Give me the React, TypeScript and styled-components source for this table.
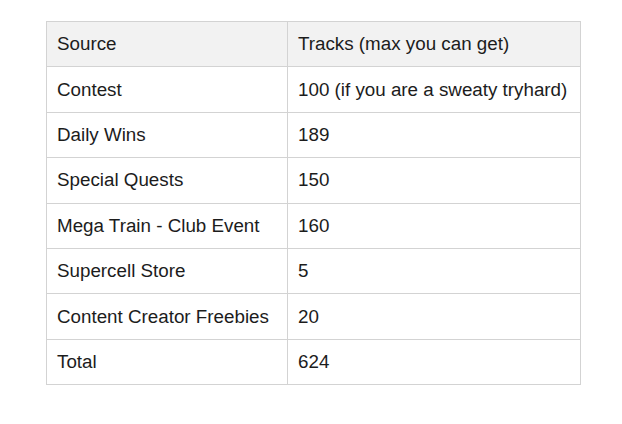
import React from "react";
import styled, { createGlobalStyle } from "styled-components";

const GlobalStyle = createGlobalStyle`
  body {
    margin: 0;
    background: #ffffff;
    font-family: "Liberation Sans", Arial, sans-serif;
  }
`;

const Page = styled.div`
  width: 622px;
  height: 424px;
  padding: 21px 0 0 46px;
  box-sizing: border-box;
`;

const Table = styled.table`
  border-collapse: collapse;
  width: 535px;
  color: #1c1c1c;
  font-size: 18.8px;
`;

const Cell = styled.td<{ $head?: boolean; $first?: boolean }>`
  border: 1px solid #d3d3d3;
  height: 45.4px;
  padding: 0 0 0 10px;
  box-sizing: border-box;
  width: ${(p) => (p.$first ? "241px" : "auto")};
  background: ${(p) => (p.$head ? "#f2f2f2" : "#ffffff")};
  vertical-align: middle;
  white-space: nowrap;
`;

const rows: [string, string][] = [
  ["Contest", "100 (if you are a sweaty tryhard)"],
  ["Daily Wins", "189"],
  ["Special Quests", "150"],
  ["Mega Train - Club Event", "160"],
  ["Supercell Store", "5"],
  ["Content Creator Freebies", "20"],
  ["Total", "624"],
];

export default function App() {
  return (
    <>
      <GlobalStyle />
      <Page>
        <Table>
          <tbody>
            <tr>
              <Cell $head $first>Source</Cell>
              <Cell $head>Tracks (max you can get)</Cell>
            </tr>
            {rows.map(([a, b]) => (
              <tr key={a}>
                <Cell $first>{a}</Cell>
                <Cell>{b}</Cell>
              </tr>
            ))}
          </tbody>
        </Table>
      </Page>
    </>
  );
}
